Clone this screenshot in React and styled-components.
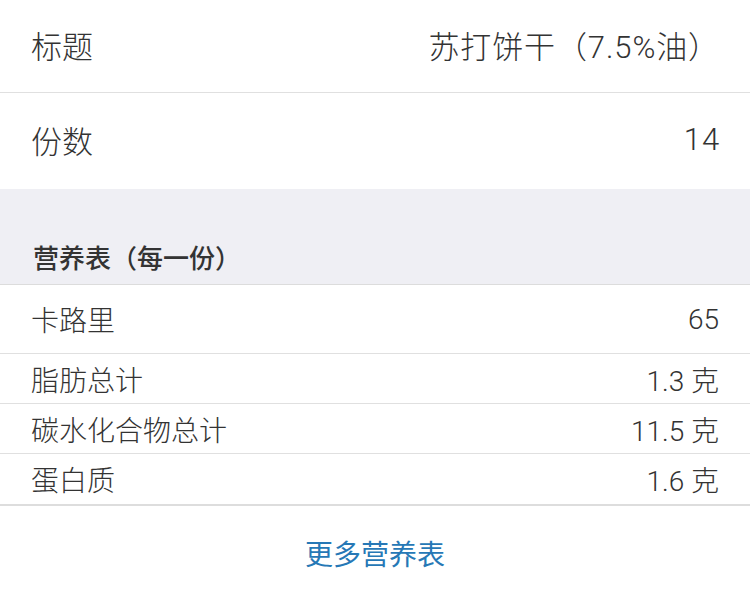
import React from 'react';
import styled, { createGlobalStyle } from 'styled-components';

const GlobalStyle = createGlobalStyle`
  html, body {
    margin: 0;
    padding: 0;
    background: #fff;
  }
  body {
    font-family: Roboto, "Noto Sans CJK SC", sans-serif;
    color: #333;
    text-spacing-trim: space-all;
  }
`;

const nutrients = [
  { label: '卡路里', value: '65', tall: true },
  { label: '脂肪总计', value: '1.3 克' },
  { label: '碳水化合物总计', value: '11.5 克' },
  { label: '蛋白质', value: '1.6 克' },
];

const App = () => {
  return (
    <Page>
      <GlobalStyle />
      <InfoRow height={93}>
        <InfoLabel>标题</InfoLabel>
        <InfoValue>苏打饼干（7.5%油）</InfoValue>
      </InfoRow>
      <InfoRow height={96} last>
        <InfoLabel>份数</InfoLabel>
        <InfoValue>14</InfoValue>
      </InfoRow>
      <SectionHeader>营养表（每一份）</SectionHeader>
      <NutrientList>
        {nutrients.map((item) => (
          <NutrientRow key={item.label} tall={item.tall}>
            <span>{item.label}</span>
            <span>{item.value}</span>
          </NutrientRow>
        ))}
      </NutrientList>
      <MoreLink>更多营养表</MoreLink>
    </Page>
  );
};

const Page = styled.div`
  width: 750px;
  min-height: 600px;
  background: #fff;
`;

const InfoRow = styled.div`
  display: flex;
  justify-content: space-between;
  align-items: center;
  height: ${(p) => p.height}px;
  padding: 0 31px 3px;
  box-sizing: border-box;
  border-bottom: ${(p) => (p.last ? 'none' : '1px solid #e0e0e0')};
  font-size: 31px;
  font-weight: 300;
`;

const InfoLabel = styled.span`
  color: #333;
`;

const InfoValue = styled.span`
  color: #333;
  letter-spacing: 0.9px;
  margin-right: -1px;
`;

const SectionHeader = styled.div`
  height: 96px;
  box-sizing: border-box;
  background: #efeff4;
  display: flex;
  align-items: flex-end;
  padding: 0 33px 9px;
  font-size: 26px;
  font-weight: 500;
  color: #333;
  border-bottom: 1px solid #dcdcdc;
`;

const NutrientList = styled.div`
  border-bottom: 2px solid #dddddd;
`;

const NutrientRow = styled.div`
  display: flex;
  justify-content: space-between;
  align-items: center;
  height: ${(p) => (p.tall ? 68 : 49)}px;
  padding: 0 31px;
  font-size: 28px;
  font-weight: 300;
  border-bottom: 1px solid #e0e0e0;

  &:last-child {
    border-bottom: none;
    height: 50px;
  }
`;

const MoreLink = styled.div`
  height: 94px;
  display: flex;
  justify-content: center;
  align-items: center;
  font-size: 28px;
  color: #2678b6;
  cursor: pointer;
`;

export default App;
